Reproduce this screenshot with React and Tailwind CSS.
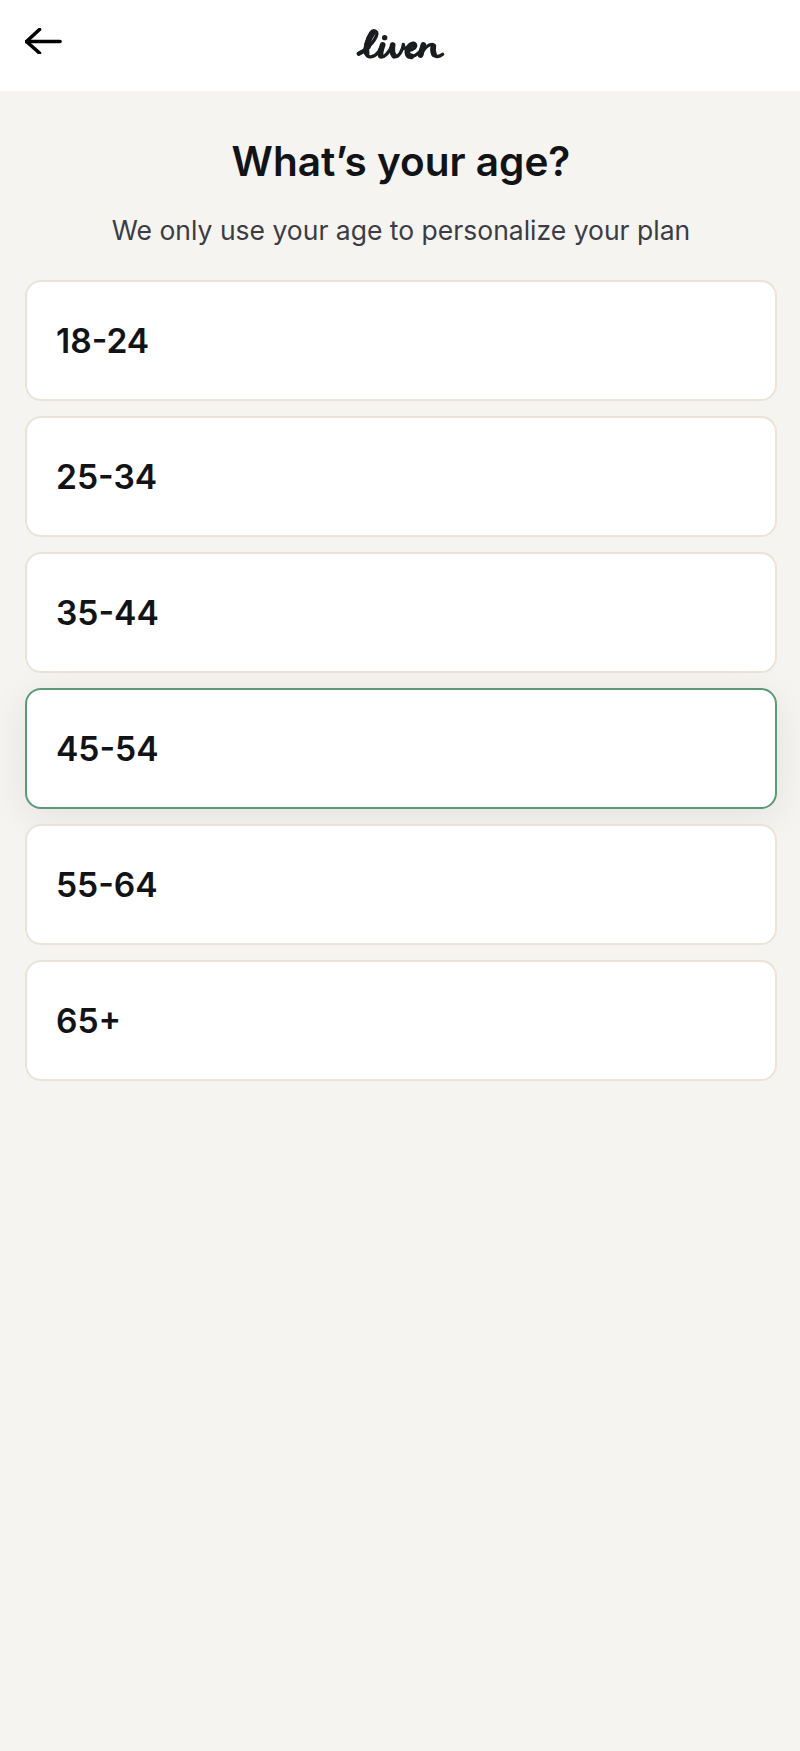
const ages = ["18-24", "25-34", "35-44", "45-54", "55-64", "65+"];

function Logo() {
  return (
    <svg width="120" height="70" viewBox="0 0 360 210" fill="none" stroke="#1a1c1f" strokeLinecap="round" strokeLinejoin="round" aria-label="liven">
      <path strokeWidth="10" d="M56 128C78 118 104 92 110 72C113 60 100 54 92 66C80 84 72 112 78 128C84 144 104 138 116 122L128 100C122 114 116 128 122 136C130 142 146 128 158 100C156 114 154 130 164 136C176 140 188 118 190 100C190 108 196 116 206 118C220 118 230 108 226 100C220 92 202 104 201 122C200 140 220 142 240 122L250 100L240 134C250 116 262 100 276 100C286 100 278 118 280 128C283 138 296 140 308 130" />
      <g strokeWidth="17">
        <path d="M98 66C84 86 76 112 80 126" />
        <path d="M128 102C124 114 120 124 122 134" />
        <path d="M158 102C156 114 156 126 162 134" />
        <path d="M220 100C208 102 202 112 202 124C203 132 208 136 214 136" />
        <path d="M250 102L242 132" />
        <path d="M280 106C278 116 279 124 282 130" />
      </g>
      <path strokeWidth="13" d="M56 128C70 122 78 116 86 108" />
      <circle cx="134" cy="80" r="8" fill="#1a1c1f" stroke="none" />
    </svg>
  );
}

export default function App() {
  return (
    <div className="min-h-[1751px] bg-[#f5f4f0] font-['Inter',sans-serif] text-[#121316]">
      <header className="relative flex h-[91px] items-center justify-center bg-white">
        <button className="absolute left-[25px] top-[28px]">
          <svg width="37" height="26" viewBox="0 0 37 26" fill="none" stroke="#000" strokeWidth="3.6" strokeLinecap="round" strokeLinejoin="round" className="block">
            <path d="M1.5 13.5H35" />
            <path d="M14.5 1.5L1.5 13.5L14.5 25" />
          </svg>
        </button>
        <Logo />
      </header>
      <main className="flex flex-col pl-[25px] pr-[23px] pt-[47px]">
        <h1 className="text-center text-[40.5px] font-semibold leading-[48px]">What’s your age?</h1>
        <p className="mt-[26px] text-center text-[26.5px] leading-[36px] text-[#3b3c44]">We only use your age to personalize your plan</p>
        <div className="mt-[32px] flex flex-col gap-[15px]">
          {ages.map((a) => (
            <div
              key={a}
              className={
                a === "45-54"
                  ? "flex h-[121px] items-center rounded-2xl border-2 border-[#5b9a78] bg-white pl-[29px] pt-[2px] text-[33.6px] font-semibold shadow-[0_8px_40px_rgba(0,0,0,0.08)]"
                  : "flex h-[121px] items-center rounded-2xl border-2 border-[#ebe3d6] bg-white pl-[29px] pt-[2px] text-[33.6px] font-semibold"
              }
            >
              {a}
            </div>
          ))}
        </div>
      </main>
    </div>
  );
}
